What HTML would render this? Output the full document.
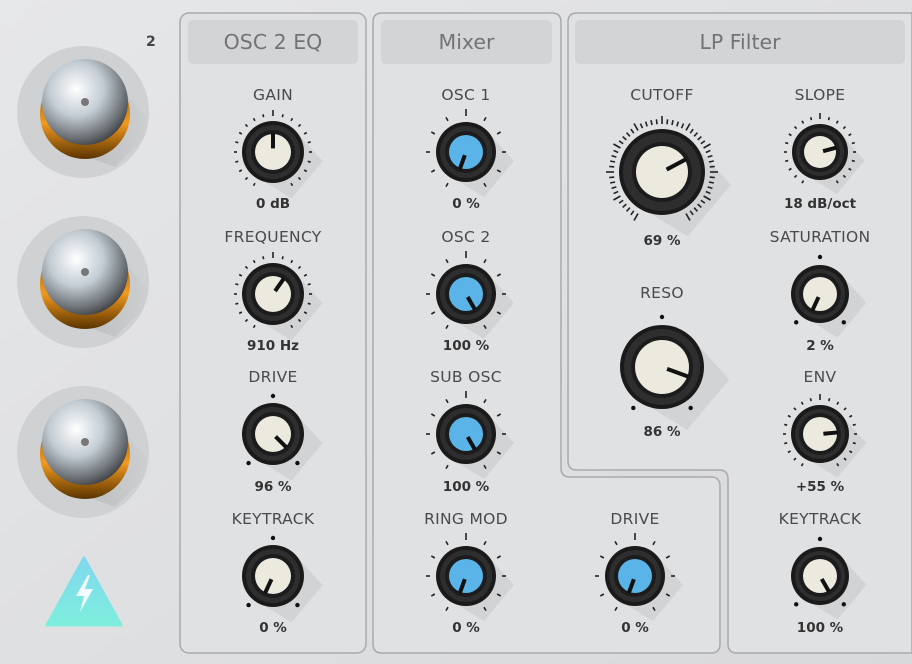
<!DOCTYPE html>
<html><head><meta charset="utf-8">
<style>
html,body{margin:0;padding:0;width:912px;height:664px;overflow:hidden;background:#dcdddf;}
body{position:relative;font-family:"DejaVu Sans","Liberation Sans",sans-serif;}
svg{position:absolute;left:0;top:0;}
.t{position:absolute;transform:translateX(-50%);white-space:nowrap;color:#4a4a4a;font-size:15.5px;letter-spacing:0.3px;}
.v{position:absolute;transform:translateX(-50%);white-space:nowrap;color:#333;font-size:13.5px;font-weight:bold;}
.h{position:absolute;color:#737373;font-size:20.5px;text-align:center;line-height:44px;background:#d3d4d6;border-radius:5px;}
</style></head><body>
<svg id="s" width="912" height="664" viewBox="0 0 912 664">
<defs>
<linearGradient id="bg" x1="0" y1="0" x2="1" y2="1"><stop offset="0" stop-color="#e6e7e9"/><stop offset="1" stop-color="#d8d9db"/></linearGradient>
<radialGradient id="sil" cx="0.4" cy="0.35" r="0.7"><stop offset="0" stop-color="#ffffff"/><stop offset="0.45" stop-color="#c3ccd3"/><stop offset="0.8" stop-color="#6f7479"/><stop offset="1" stop-color="#3a3c3e"/></radialGradient>
<linearGradient id="org" x1="0" y1="0" x2="0" y2="1"><stop offset="0" stop-color="#6a4000"/><stop offset="0.6" stop-color="#f29a1e"/><stop offset="1" stop-color="#5a3300"/></linearGradient>
<linearGradient id="tri" x1="0" y1="0" x2="0" y2="1"><stop offset="0" stop-color="#7fd8ee"/><stop offset="1" stop-color="#7eeedd"/></linearGradient>
<linearGradient id="sh" x1="0" y1="0" x2="1" y2="0"><stop offset="0" stop-color="#000" stop-opacity="0.22"/><stop offset="1" stop-color="#000" stop-opacity="0"/></linearGradient>
</defs>
<rect width="912" height="664" fill="url(#bg)"/>
<rect x="180" y="13" width="186" height="640" rx="9" fill="#e0e1e3" stroke="#a9aaac" stroke-width="1.5"/>
<path d="M382,13 H552 Q561,13 561,22 V468 Q561,477 570,477 H711 Q720,477 720,486 V644 Q720,653 711,653 H382 Q373,653 373,644 V22 Q373,13 382,13 Z" fill="#e0e1e3" stroke="#a9aaac" stroke-width="1.5"/>
<path d="M577,13 H912 V653 H737 Q728,653 728,644 V479 Q728,470 719,470 H577 Q568,470 568,461 V22 Q568,13 577,13 Z" fill="#e0e1e3" stroke="#a9aaac" stroke-width="1.5"/>
<g id="left"></g>
<path d="M84,558 L121,625 H47 Z" fill="url(#tri)" stroke="url(#tri)" stroke-width="3" stroke-linejoin="round"/>
<path d="M88,575 L76,596 H84 L80,612 L93,589 H85 L90,575 Z" fill="#fff" opacity="0.9"/>
<g id="k"></g>
</svg>
<div style="position:absolute;left:146px;top:34px;font-size:14px;font-weight:bold;color:#444">2</div>
<div class="h" style="left:188px;top:20px;width:170px;">OSC 2 EQ</div>
<div class="h" style="left:381px;top:20px;width:171px;">Mixer</div>
<div class="h" style="left:575px;top:20px;width:330px;">LP Filter</div>

<div class="t" style="left:273px;top:86px">GAIN</div><div class="v" style="left:273px;top:196px">0 dB</div>
<div class="t" style="left:273px;top:228px">FREQUENCY</div><div class="v" style="left:273px;top:338px">910 Hz</div>
<div class="t" style="left:273px;top:368px">DRIVE</div><div class="v" style="left:273px;top:479px">96 %</div>
<div class="t" style="left:273px;top:510px">KEYTRACK</div><div class="v" style="left:273px;top:620px">0 %</div>

<div class="t" style="left:466px;top:86px">OSC 1</div><div class="v" style="left:466px;top:196px">0 %</div>
<div class="t" style="left:466px;top:228px">OSC 2</div><div class="v" style="left:466px;top:338px">100 %</div>
<div class="t" style="left:466px;top:368px">SUB OSC</div><div class="v" style="left:466px;top:479px">100 %</div>
<div class="t" style="left:466px;top:510px">RING MOD</div><div class="v" style="left:466px;top:620px">0 %</div>
<div class="t" style="left:635px;top:510px">DRIVE</div><div class="v" style="left:635px;top:620px">0 %</div>

<div class="t" style="left:662px;top:86px">CUTOFF</div><div class="v" style="left:662px;top:233px">69 %</div>
<div class="t" style="left:662px;top:284px">RESO</div><div class="v" style="left:662px;top:424px">86 %</div>
<div class="t" style="left:820px;top:86px">SLOPE</div><div class="v" style="left:820px;top:196px">18 dB/oct</div>
<div class="t" style="left:820px;top:228px">SATURATION</div><div class="v" style="left:820px;top:338px">2 %</div>
<div class="t" style="left:820px;top:368px">ENV</div><div class="v" style="left:820px;top:479px">+55 %</div>
<div class="t" style="left:820px;top:510px">KEYTRACK</div><div class="v" style="left:820px;top:620px">100 %</div>

<script>
var NS="http://www.w3.org/2000/svg";
function el(p,n,a){var e=document.createElementNS(NS,n);for(var k in a)e.setAttribute(k,a[k]);p.appendChild(e);return e;}
var L=document.getElementById('left');
[112,282,452].forEach(function(y){
 el(L,'circle',{cx:83,cy:y,r:66,fill:'#d0d1d3'});
 el(L,'path',{d:'M'+(85+30)+','+(y-30)+' L'+(85+70)+','+(y+15)+' L'+(85+30)+','+(y+55)+' L'+(85-10)+','+(y+40)+'Z',fill:'url(#sh)',opacity:0.5});
 el(L,'circle',{cx:85,cy:y+2,r:45,fill:'url(#org)'});
 el(L,'circle',{cx:85,cy:y-10,r:43,fill:'url(#sil)'});
 el(L,'circle',{cx:85,cy:y-10,r:4,fill:'#777'});
});
var G=document.getElementById('k');
function rad(a){return (a-90)*Math.PI/180;}
function knob(x,y,R,ri,fill,ang,ticks,tr){
 el(G,'path',{d:'M'+(x+R*0.7)+','+(y-R*0.7)+' L'+(x+R*1.6)+','+(y+R*0.3)+' L'+(x+R*0.6)+','+(y+R*1.5)+' L'+(x-R*0.7)+','+(y+R*0.7)+'Z',fill:'#000',opacity:0.06});
 ticks.forEach(function(t){
  var a=rad(t[0]);
  if(t[1]=='d'){el(G,'circle',{cx:x+Math.cos(a)*tr,cy:y+Math.sin(a)*tr,r:2.2,fill:'#111'});}
  else{var l=t[1];el(G,'line',{x1:x+Math.cos(a)*tr,y1:y+Math.sin(a)*tr,x2:x+Math.cos(a)*(tr+l),y2:y+Math.sin(a)*(tr+l),stroke:'#222','stroke-width':1.6});}
 });
 el(G,'circle',{cx:x,cy:y,r:R,fill:'#1a1a1a'});
 el(G,'circle',{cx:x,cy:y,r:R-4,fill:'#2e2e2e'});
 el(G,'circle',{cx:x,cy:y,r:ri+4,fill:'#1c1c1c'});
 el(G,'circle',{cx:x,cy:y,r:ri,fill:fill});
 var a=rad(ang);
 el(G,'line',{x1:x+Math.cos(a)*ri*0.2,y1:y+Math.sin(a)*ri*0.2,x2:x+Math.cos(a)*(ri+1),y2:y+Math.sin(a)*(ri+1),stroke:'#111','stroke-width':4});
}
function range(n,a0,a1,len,major){var r=[];for(var i=0;i<n;i++){var a=a0+(a1-a0)*i/(n-1);r.push([a,(major&&major(i))?len+3:len]);}return r;}
var dots=[[0,'d'],[-140,'d'],[140,'d']];
var blue=range(11,-150,150,4,function(i){return i==5;});
var dense=range(21,-150,150,3,function(i){return i==10;});
var cream='#ece9df',bl='#5ab4e8';
knob(273,152,31,18,cream,0,dense,36);
knob(273,294,31,18,cream,35,dense,36);
knob(273,434,31,18,cream,135,dots,38);
knob(273,576,31,18,cream,-155,dots,38);
knob(466,152,30,17,bl,-160,blue,36);
knob(466,294,30,17,bl,150,blue,36);
knob(466,434,30,17,bl,150,blue,36);
knob(466,576,30,17,bl,-160,blue,36);
knob(635,576,30,17,bl,-160,blue,36);
knob(662,172,43,26,cream,62,range(51,-150,150,5,function(i){return i%5==0;}),48);
knob(662,367,42,27,cream,110,[[0,'d'],[-145,'d'],[145,'d']],50);
knob(820,152,28,16,cream,75,range(21,-150,150,3,function(i){return i==10;}),33);
knob(820,294,29,17,cream,-155,dots,37);
knob(820,434,29,17,cream,85,range(21,-150,150,3,function(i){return i==10;}),34);
knob(820,576,29,17,cream,150,dots,37);
</script>
</body></html>
